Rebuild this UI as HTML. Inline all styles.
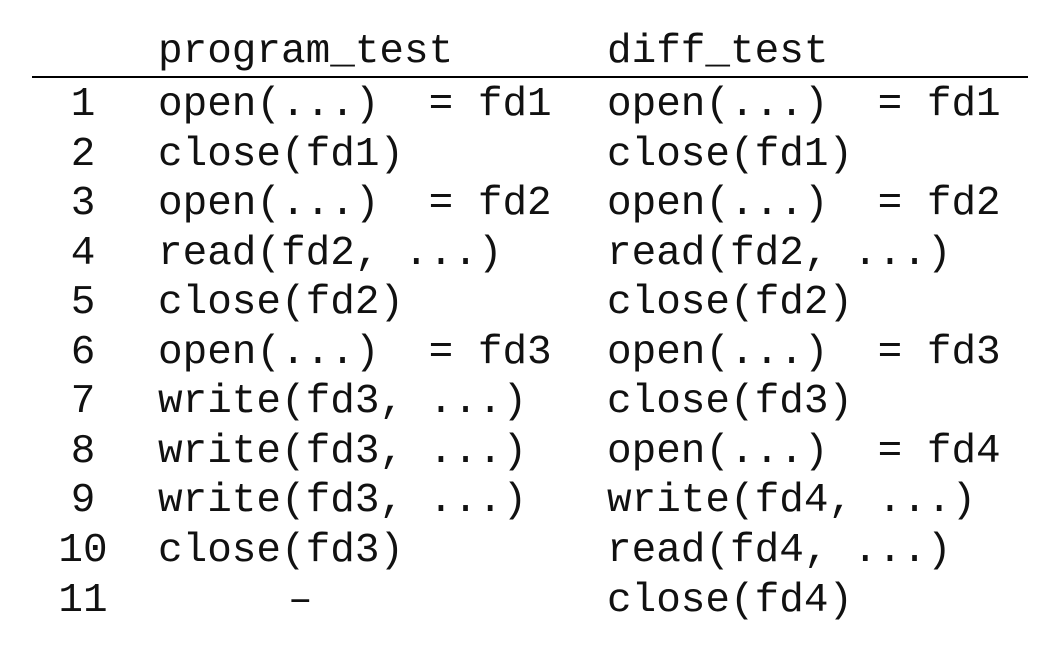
<!DOCTYPE html>
<html><head><meta charset="utf-8"><style>
html,body{margin:0;padding:0;background:#fff;}
body{width:1058px;height:662px;position:relative;overflow:hidden;font-family:"Liberation Mono",monospace;font-size:41px;color:#111;}
.r{position:absolute;left:0;height:50px;line-height:50px;white-space:pre;}
.n{position:absolute;left:43px;width:80px;text-align:center;}
.a{position:absolute;left:158px;}
.b{position:absolute;left:607px;}
.line{position:absolute;left:32px;top:76px;width:996px;height:2px;background:#000;}
</style></head><body>
<div class="r" style="top:27px"><span class="a">program_test</span><span class="b">diff_test</span></div>
<div class="line"></div>
<div class="r" style="top:80px"><span class="n">1</span><span class="a">open(...)  = fd1</span><span class="b">open(...)  = fd1</span></div>
<div class="r" style="top:130px"><span class="n">2</span><span class="a">close(fd1)</span><span class="b">close(fd1)</span></div>
<div class="r" style="top:179px"><span class="n">3</span><span class="a">open(...)  = fd2</span><span class="b">open(...)  = fd2</span></div>
<div class="r" style="top:229px"><span class="n">4</span><span class="a">read(fd2, ...)</span><span class="b">read(fd2, ...)</span></div>
<div class="r" style="top:278px"><span class="n">5</span><span class="a">close(fd2)</span><span class="b">close(fd2)</span></div>
<div class="r" style="top:328px"><span class="n">6</span><span class="a">open(...)  = fd3</span><span class="b">open(...)  = fd3</span></div>
<div class="r" style="top:377px"><span class="n">7</span><span class="a">write(fd3, ...)</span><span class="b">close(fd3)</span></div>
<div class="r" style="top:427px"><span class="n">8</span><span class="a">write(fd3, ...)</span><span class="b">open(...)  = fd4</span></div>
<div class="r" style="top:476px"><span class="n">9</span><span class="a">write(fd3, ...)</span><span class="b">write(fd4, ...)</span></div>
<div class="r" style="top:526px"><span class="n">10</span><span class="a">close(fd3)</span><span class="b">read(fd4, ...)</span></div>
<div class="r" style="top:576px"><span class="n">11</span><span class="a" style="left:288px">–</span><span class="b">close(fd4)</span></div>
</body></html>
